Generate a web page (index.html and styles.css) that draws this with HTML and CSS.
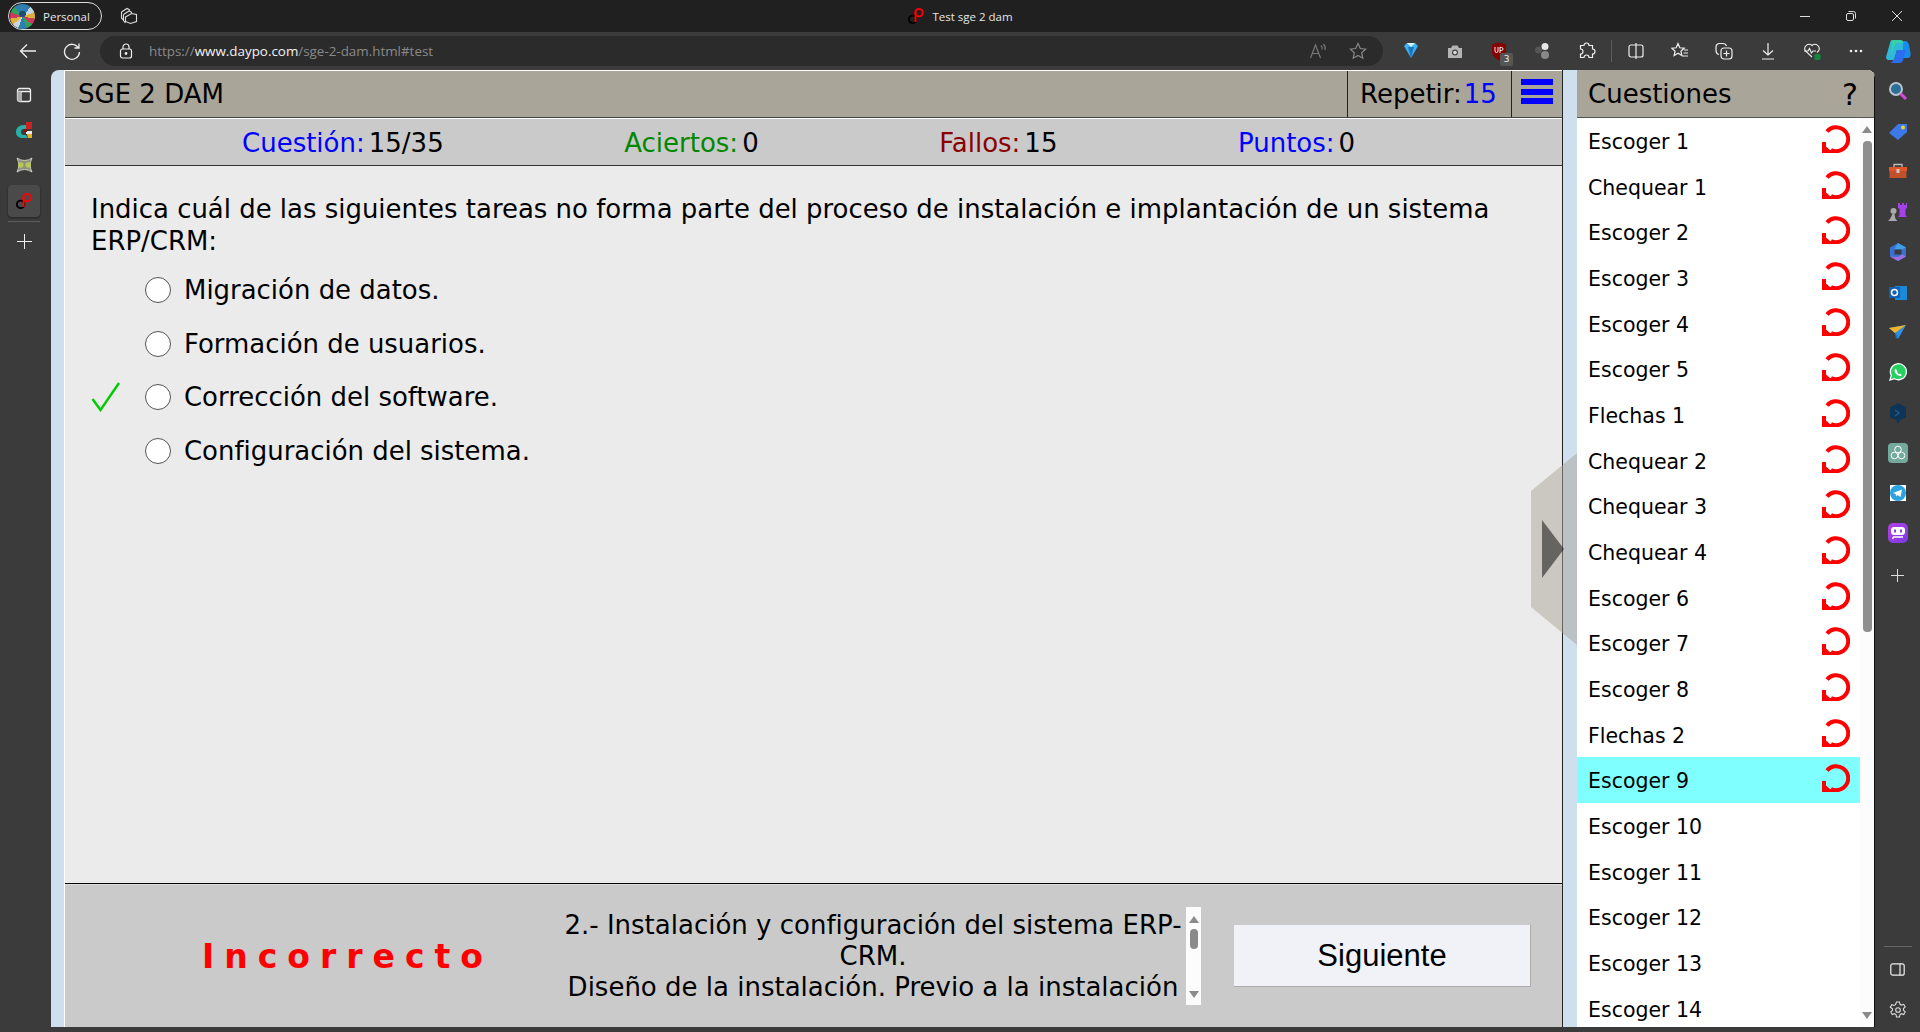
FILE: index.html
```html
<!DOCTYPE html>
<html lang="es">
<head>
<meta charset="utf-8">
<title>Test sge 2 dam</title>
<link rel="stylesheet" href="styles.css">
</head>
<body>
<svg class="defs" width="0" height="0" aria-hidden="true">
  <symbol id="retry" viewBox="0 0 28 28">
    <path d="M5 6.500A12 12 0 1 1 9 25" fill="none" stroke="#f00" stroke-width="4"/>
    <path d="M0 17h4v4.500l4 3.500h5v3H0z" fill="#f00"/>
  </symbol>
  <symbol id="logo" viewBox="0 0 24 24">
    <circle cx="7.500" cy="16.500" r="5" fill="none" stroke="#000" stroke-width="2.600"/>
    <circle cx="16" cy="7.500" r="5" fill="none" stroke="#f00" stroke-width="2.600"/>
    <path d="M11.500 7v13" stroke="#f00" stroke-width="2.600" fill="none"/>
  </symbol>
</svg>

<header class="titlebar">
  <div class="title-left">
    <div class="profile">
      <span class="avatar"></span>
      <span>Personal</span>
    </div>
    <svg class="tabs-icon" width="18" height="18" viewBox="0 0 18 18" fill="none" stroke="#ddd" stroke-width="1.100">
      <path d="M1.500 5 7 1.500l3 1.500M3.500 7.500l5.500-3.500 3 1.500"/>
      <path d="M1.500 5v6l2 2M3.500 7.500v6l2 2.500M5.500 10l6-3.500 5 1v7l-6 2-5-2z"/>
    </svg>
  </div>
  <div class="title-center">
    <svg width="18" height="18"><use href="#logo"/></svg>
    <span>Test sge 2 dam</span>
  </div>
  <div class="window-controls">
    <span class="win-btn"><svg width="12" height="12" stroke="#ddd" fill="none"><path d="M1 6.500h10"/></svg></span>
    <span class="win-btn"><svg width="12" height="12" stroke="#ddd" fill="none"><rect x="1.500" y="3.500" width="7" height="7" rx="1.500"/><path d="M3.500 1.500h5a2 2 0 0 1 2 2v5"/></svg></span>
    <span class="win-btn"><svg width="12" height="12" stroke="#ddd" fill="none"><path d="M1 1l10 10M11 1L1 11"/></svg></span>
  </div>
</header>

<nav class="toolbar">
  <span class="nav-slot back"><svg width="18" height="16" fill="none" stroke="#eee" stroke-width="1.300"><path d="M17 8H1.500M8 1.500 1.500 8 8 14.500"/></svg></span>
  <span class="nav-slot reload"><svg width="18" height="18" fill="none" stroke="#eee" stroke-width="1.300"><path d="M15.500 6A7.500 7.500 0 1 0 16.500 10M16 1.500V6h-4.500"/></svg></span>
  <div class="address">
    <svg width="14" height="16" fill="none" stroke="#eee" stroke-width="1.200"><rect x="1.500" y="6" width="11" height="9" rx="2"/><path d="M4 6V4a3 3 0 0 1 6 0v2"/><circle cx="7" cy="10.500" r=".8" fill="#eee"/></svg>
    <span class="url"><span class="url-dim">https://</span><span class="url-host">www.daypo.com</span><span class="url-dim">/sge-2-dam.html#test</span></span>
    <span class="addr-end">
      <svg width="18" height="18" fill="none" stroke="#777" stroke-width="1.200"><path d="M1.500 16 6.500 3l5 13M3.500 11.500h6M12 3.500a4 4 0 0 1 1 4M14.500 2a7 7 0 0 1 1.500 6"/></svg>
      <svg class="star" width="18" height="18" fill="none" stroke="#888" stroke-width="1.200"><path d="m9 1.500 2.300 5 5.400.6-4 3.700 1.100 5.400L9 13.500l-4.800 2.700 1.100-5.400-4-3.700 5.400-.6z"/></svg>
    </span>
  </div>
  <div class="tools">
    <span class="tool"><svg width="16" height="18"><path d="M1 4 4 1h8l3 3-7 12z" fill="#3fb2f0"/><path d="M4 1h8l-4 4z" fill="#d5f2ff"/><path d="M5 5h6l-3 11z" fill="#1b74c4"/></svg></span>
    <span class="tool"><svg width="16" height="15"><path d="M1 4h3l1.500-2.500h5L12 4h3v10H1z" fill="#b4b4b4"/><circle cx="8" cy="8.500" r="3" fill="#444"/><circle cx="8" cy="8.500" r="1.800" fill="#ddd"/></svg></span>
    <span class="tool has-badge"><svg width="16" height="19"><path d="M1 2.500 8 .5l7 2v7c0 4-3.500 7-7 9-3.500-2-7-5-7-9z" fill="#800"/><path d="M4 5v4a1.500 1.500 0 0 0 3 0V5M9 5v6M9 5.500h1.500a1.500 1.500 0 0 1 0 3H9" fill="none" stroke="#eee" stroke-width="1"/></svg><span class="badge">3</span></span>
    <span class="tool"><svg width="18" height="18"><circle cx="11" cy="4.500" r="3.500" fill="#e6e6e6"/><circle cx="4.500" cy="8" r="3.500" fill="#555"/><circle cx="11" cy="13" r="4" fill="#888"/></svg></span>
    <span class="tool"><svg width="18" height="18" fill="none" stroke="#eee" stroke-width="1.200"><path d="M6 3.500a2.500 2.500 0 0 1 5 0h3.500V7a2.500 2.500 0 0 1 0 5v3.500H11a2.500 2.500 0 0 0-5 0H2.500V12a2.500 2.500 0 0 0 0-5V3.500z"/></svg></span>
    <span class="tool-sep"></span>
    <span class="tool"><svg width="16" height="18" fill="none" stroke="#eee" stroke-width="1.200"><rect x="1" y="3" width="14" height="12" rx="2"/><path d="M8 1v16"/></svg></span>
    <span class="tool"><svg width="18" height="18" fill="none" stroke="#eee" stroke-width="1.200"><path d="m7 1.500 1.800 4.300 4.400.4-3.300 3 1 4.300L7 11.300l-3.900 2.200 1-4.300-3.300-3 4.400-.4zM13 8h4M12.500 11H17M11.500 14H17"/></svg></span>
    <span class="tool"><svg width="18" height="18" fill="none" stroke="#eee" stroke-width="1.200"><path d="M4 12.500c-2-.5-3-2-3-4V5a3.500 3.500 0 0 1 3.500-3.500H8c1.500 0 3 1 3.500 2.500"/><rect x="6" y="6" width="11" height="11" rx="3"/><path d="M11.500 8.500v6M8.500 11.500h6"/></svg></span>
    <span class="tool"><svg width="14" height="18" fill="none" stroke="#eee" stroke-width="1.200"><path d="M7 1v12M2 8.500 7 13l5-4.500M1 17h12"/></svg></span>
    <span class="tool"><svg width="18" height="18" fill="none" stroke="#eee" stroke-width="1.100"><path d="M9 15 2.500 9a4.300 4.300 0 0 1 6.500-5.500A4.300 4.300 0 0 1 15.500 9L14 10.500"/><path d="M1 9h4l1.500-2.500L8.500 11l1.500-2h3"/><rect x="11.500" y="12" width="6" height="6" rx="1.500" fill="#128a3d" stroke="none"/></svg></span>
    <span class="tool"><svg width="14" height="4" fill="#eee"><circle cx="2" cy="2" r="1.300"/><circle cx="7" cy="2" r="1.300"/><circle cx="12" cy="2" r="1.300"/></svg></span>
    <span class="tool copilot"><svg width="26" height="26" viewBox="0 0 26 26"><path d="M7 2h8c2 0 3 1 3.500 3L21 12H12L9 22H4C1.500 22 .5 20 1.500 17.500L5 5C5.500 3 6 2 7 2z" fill="#2fb9d8"/><path d="M18 3h2c2 0 3 1.500 4 4l1.500 8c.5 3-.5 5-3 5L18 20z" fill="#1a8bec"/><path d="M9 22l3-10h9l-3 10c-.5 2-2 3-4 3H7c-1 0-1-.5-1-.5z" fill="#2b6ff0"/><path d="M7 2h8c2 0 3 1 3.500 3H13c-2 0-3 1-3.500 3L6 17z" fill="#35d0a8"/></svg></span>
  </div>
</nav>

<div class="viewport">
  <aside class="left-rail">
    <span class="left-slot"><svg width="16" height="16" fill="none" stroke="#eee" stroke-width="1.300"><rect x="1.500" y="1.500" width="13" height="13" rx="2"/><path d="M1.500 4.500h13M5 4.500v10"/><rect x="1.500" y="4.500" width="3.500" height="10" fill="#aaa" stroke="none"/></svg></span>
    <span class="left-slot"><svg width="18" height="18"><path d="M11 1h6v7h-6z" fill="#c22"/><path d="M1 11c0-4 3-7 8-7h2v4H9c-2 0-3 1-3 3s1 3 3 3h2l2 3H8c-4 0-7-2-7-6z" fill="#28b0a8"/><path d="M11 10h6v3h-6z" fill="#eee"/><path d="M12 13h5v4h-4z" fill="#e8b020"/><path d="M9 8h3v3H9z" fill="#811"/></svg></span>
    <span class="left-slot"><svg width="17" height="16"><path d="M1 1Q8.500 6 16 1Q12.500 8 16 15Q8.500 10 1 15Q4.500 8 1 1z" fill="#8f9078" stroke="#ddd" stroke-width=".8"/><circle cx="4.800" cy="8" r="2.800" fill="#b9c85a"/><circle cx="12.200" cy="8" r="2.800" fill="#b9c85a"/></svg></span>
    <span class="left-slot active"><svg width="18" height="18"><use href="#logo"/></svg></span>
    <span class="left-sep"></span>
    <span class="left-slot plus"><svg width="15" height="15" stroke="#eee" fill="none"><path d="M7.500 0v15M0 7.500h15"/></svg></span>
  </aside>

  <div class="page">
    <main class="quiz">
      <div class="quiz-head">
        <div class="quiz-title">SGE 2 DAM</div>
        <div class="repeat">Repetir:<span class="num-blue">15</span></div>
        <div class="burger"><span></span><span></span><span></span></div>
      </div>
      <div class="stats">
        <div class="stat"><span class="lab-blue">Cuestión:</span><span>15/35</span></div>
        <div class="stat"><span class="lab-green">Aciertos:</span><span>0</span></div>
        <div class="stat"><span class="lab-red">Fallos:</span><span>15</span></div>
        <div class="stat"><span class="lab-blue">Puntos:</span><span>0</span></div>
      </div>
      <section class="question">
        <p class="q-text">Indica cuál de las siguientes tareas no forma parte del proceso de instalación e implantación de un sistema ERP/CRM:</p>
        <div class="option"><span class="mark"></span><span class="radio"></span><span>Migración de datos.</span></div>
        <div class="option"><span class="mark"></span><span class="radio"></span><span>Formación de usuarios.</span></div>
        <div class="option"><span class="mark"><svg width="30" height="30" fill="none" stroke="#0c0" stroke-width="2.400"><path d="M1.500 17 9.500 28 28 1"/></svg></span><span class="radio"></span><span>Corrección del software.</span></div>
        <div class="option"><span class="mark"></span><span class="radio"></span><span>Configuración del sistema.</span></div>
      </section>
      <footer class="result">
        <div class="verdict">Incorrecto</div>
        <div class="explain">2.- Instalación y configuración del sistema ERP-CRM.<br>Diseño de la instalación. Previo a la instalación</div>
        <div class="mini-scroll"><i class="up"></i><b></b><i class="down"></i></div>
        <button class="next" type="button">Siguiente</button>
      </footer>
    </main>

    <svg class="pull" width="46" height="192" viewBox="0 0 46 192"><path d="M0 38 46 0v192L0 154z" fill="#a9a598" fill-opacity=".5"/><path d="M11 67 33 96 11 125z" fill="#000" fill-opacity=".5"/></svg>

    <aside class="side">
      <div class="side-head"><span>Cuestiones</span><span class="help">?</span></div>
      <div class="side-body">
        <ul class="list">
          <li>Escoger 1<svg width="28" height="28"><use href="#retry"/></svg></li>
          <li>Chequear 1<svg width="28" height="28"><use href="#retry"/></svg></li>
          <li>Escoger 2<svg width="28" height="28"><use href="#retry"/></svg></li>
          <li>Escoger 3<svg width="28" height="28"><use href="#retry"/></svg></li>
          <li>Escoger 4<svg width="28" height="28"><use href="#retry"/></svg></li>
          <li>Escoger 5<svg width="28" height="28"><use href="#retry"/></svg></li>
          <li>Flechas 1<svg width="28" height="28"><use href="#retry"/></svg></li>
          <li>Chequear 2<svg width="28" height="28"><use href="#retry"/></svg></li>
          <li>Chequear 3<svg width="28" height="28"><use href="#retry"/></svg></li>
          <li>Chequear 4<svg width="28" height="28"><use href="#retry"/></svg></li>
          <li>Escoger 6<svg width="28" height="28"><use href="#retry"/></svg></li>
          <li>Escoger 7<svg width="28" height="28"><use href="#retry"/></svg></li>
          <li>Escoger 8<svg width="28" height="28"><use href="#retry"/></svg></li>
          <li>Flechas 2<svg width="28" height="28"><use href="#retry"/></svg></li>
          <li class="current">Escoger 9<svg width="28" height="28"><use href="#retry"/></svg></li>
          <li>Escoger 10</li>
          <li>Escoger 11</li>
          <li>Escoger 12</li>
          <li>Escoger 13</li>
          <li>Escoger 14</li>
        </ul>
        <div class="side-scroll"><i class="up"></i><b></b><i class="down"></i></div>
      </div>
    </aside>
  </div>

  <aside class="right-rail">
    <span class="r-slot"><svg width="20" height="20"><circle cx="8" cy="8" r="6" fill="#2b6e96" stroke="#b9c4cc" stroke-width="2"/><path d="M12.500 12.500 18 18" stroke="#d24bd8" stroke-width="3"/></svg></span>
    <span class="r-slot"><svg width="20" height="18"><path d="M1 11 10 2h9v8l-9 8z" fill="#3d78e8"/><circle cx="15" cy="5.500" r="2" fill="#f2d030"/></svg></span>
    <span class="r-slot"><svg width="20" height="16"><path d="M6 4V1.500h8V4" fill="none" stroke="#bbb" stroke-width="1.300"/><path d="M1 4h18v4H1z" fill="#e0552a"/><path d="M1.500 8h17v7h-17z" fill="#c2502a"/><rect x="8.500" y="6" width="3" height="4" fill="#ccc"/></svg></span>
    <span class="r-slot"><svg width="20" height="20"><path d="M10 1h2v2h2V1h2v2h2V1h1v5l-1.500 1v6l1.500 2H10l1.500-2V7L10 6z" fill="#a540ea"/><circle cx="5.500" cy="9" r="3" fill="#aaa"/><path d="M4.500 12h2l1 5 2 2H0l2-2z" fill="#aaa"/></svg></span>
    <span class="r-slot"><svg width="18" height="20"><path d="M9 1l8 4.500v9L9 19l-8-4.500v-9z" fill="#3b6fd0"/><path d="M1 14.500 9 19l8-4.500-4-2L9 15z" fill="#a070e0"/><path d="M9 1l8 4.500-4 2H5z" fill="#3fa0e8"/><path d="M5.500 7.500h7v5h-7z" fill="#3b3b3b"/></svg></span>
    <span class="r-slot"><svg width="18" height="18"><path d="M6 3h12v14H6z" fill="#1a8ad8"/><path d="M0 4h11v11H0z" fill="#0f5fb8"/><circle cx="5.500" cy="9.500" r="3" fill="none" stroke="#fff" stroke-width="1.500"/></svg></span>
    <span class="r-slot"><svg width="18" height="14"><path d="M0 3 17 0 9 14 6 8z" fill="#2f8fe8"/><path d="M0 3 17 0 6 8z" fill="#f0b429"/><path d="M6 8 7 14 9 11z" fill="#187bc0"/></svg></span>
    <span class="r-slot"><svg width="18" height="18"><path d="M1 17l1.300-4.600A8 8 0 1 1 5.500 15.700z" fill="#25cf60" stroke="#fff" stroke-width="1.300"/><path d="M6.500 5.500 5.500 7c0 3 3 6 6 6l1.500-1-2-1.500-1 .7-2-2 .5-1z" fill="#fff"/></svg></span>
    <span class="r-slot"><svg width="18" height="22"><path d="M9 1l8 4.500v10L11 18l-2 3.500L7 18l-6-2.500v-10z" fill="#0e3558"/><path d="M6 8l4 3-4 3" fill="none" stroke="#1e5a88" stroke-width="1.500"/></svg></span>
    <span class="r-slot"><span class="tile gpt"><svg width="16" height="16" fill="none" stroke="#fff" stroke-width="1"><circle cx="8" cy="4.500" r="3.300"/><circle cx="4.500" cy="10.500" r="3.300"/><circle cx="11.500" cy="10.500" r="3.300"/></svg></span></span>
    <span class="r-slot"><span class="tile tg"><svg width="16" height="16"><circle cx="8" cy="8" r="8" fill="#2aa3e0"/><path d="M3 8l9-3.500-1.500 7.500-3-2-1.500 1.500-.3-2.500z" fill="#fff"/></svg></span></span>
    <span class="r-slot"><span class="tile bot"><svg width="16" height="14"><rect x="1" y="1" width="14" height="8" rx="3" fill="#fff"/><rect x="4" y="3.500" width="2" height="3" fill="#9040e0"/><rect x="10" y="3.500" width="2" height="3" fill="#9040e0"/><path d="M3 11h10M3 11v2" stroke="#fff" stroke-width="1.300"/></svg></span></span>
    <span class="r-slot plus-r"><svg width="13" height="13" stroke="#ddd" fill="none"><path d="M6.500 0v13M0 6.500h13"/></svg></span>
    <span class="r-sep"></span>
    <span class="r-slot"><svg width="15" height="13" fill="none" stroke="#eee" stroke-width="1.200"><rect x=".8" y=".8" width="13.400" height="11.400" rx="2"/><path d="M10 .8v11.400"/></svg></span>
    <span class="r-slot"><svg width="18" height="18" viewBox="0 0 18 18" fill="none" stroke="#ddd" stroke-width="1.100"><path d="M7.500 1h3l.5 2.300 1.500.8 2.200-.8 1.500 2.600-1.700 1.600v1.800l1.700 1.600-1.500 2.600-2.200-.8-1.500.8-.5 2.500h-3l-.5-2.500-1.500-.8-2.200.8-1.500-2.600 1.700-1.600V7.900L1.300 6.300l1.500-2.600 2.200.8 1.500-.8z"/><circle cx="9" cy="9" r="2.300"/></svg></span>
  </aside>
</div>
</body>
</html>
```
FILE: styles.css
```css
* { box-sizing: border-box; }
html, body { margin: 0; height: 100%; }
body {
  display: flex;
  flex-direction: column;
  overflow: hidden;
  background: #3b3b3b;
  font-family: "DejaVu Sans", sans-serif;
  color: #000;
}
.defs { position: absolute; }

/* window title bar */
.titlebar {
  height: 32px;
  flex: none;
  background: #202020;
  color: #e6e6e6;
  font-family: "Open Sans", "Noto Sans", sans-serif;
  display: grid;
  grid-template-columns: 1fr auto 1fr;
  align-items: center;
}
.title-left { display: flex; align-items: center; padding-left: 8px; }
.profile {
  width: 94px;
  height: 28px;
  border: 1px solid #ddd;
  border-radius: 14px;
  display: flex;
  align-items: center;
  gap: 8px;
  padding-left: 1px;
  font-size: 11.500px;
}
.avatar {
  width: 25px;
  height: 25px;
  border-radius: 50%;
  background: radial-gradient(circle at 50% 40%, #1d4f74 0 16%, transparent 18%), repeating-conic-gradient(#2f7fb0 0 40deg, #c7d6e0 40deg 70deg, #e0b23c 70deg 100deg, #c93c5c 100deg 130deg, #2fa35c 130deg 160deg);
}
.tabs-icon { margin-left: 18px; }
.title-center { display: flex; align-items: center; gap: 7px; font-size: 11.500px; }
.window-controls { display: flex; justify-content: flex-end; }
.win-btn { width: 46px; height: 32px; display: flex; align-items: center; justify-content: center; }

/* browser toolbar */
.toolbar {
  height: 38px;
  flex: none;
  background: #3b3b3b;
  display: flex;
  align-items: center;
  padding-left: 8px;
}
.nav-slot { display: flex; align-items: center; justify-content: center; }
.back { width: 40px; }
.reload { width: 48px; }
.address {
  width: 1283px;
  height: 30px;
  margin-left: 4px;
  margin-right: 6px;
  border-radius: 15px;
  background: #2b2b2b;
  display: flex;
  align-items: center;
  padding-left: 19px;
  font-family: "Open Sans", "Noto Sans", sans-serif;
  font-size: 13.400px;
}
.url { margin-left: 16px; }
.url-dim { color: #8a8a8a; }
.url-host { color: #f2f2f2; }
.addr-end { margin-left: auto; display: flex; align-items: center; padding-right: 16px; }
.star { margin-left: 22px; }
.tools { display: flex; align-items: center; }
.tool { width: 44px; height: 30px; display: flex; align-items: center; justify-content: center; position: relative; }
.tool-sep { width: 1px; height: 22px; margin: 0 2px; background: #5c5c5c; }
.copilot { width: 40px; }
.has-badge .badge {
  position: absolute;
  right: 8px;
  bottom: 0;
  width: 13px;
  height: 13px;
  border-radius: 2px;
  background: #555;
  color: #eee;
  font-size: 9px;
  line-height: 13px;
  text-align: center;
}

/* main area */
.viewport { flex: 1; min-height: 0; display: flex; }
.left-rail { width: 51px; flex: none; display: flex; flex-direction: column; align-items: center; padding: 7px 3px 0 0; }
.left-slot { width: 32px; height: 35px; flex: none; display: flex; align-items: center; justify-content: center; }
.left-slot.active { height: 32px; margin-top: 3px; background: #4a4a4a; border-radius: 4px; box-shadow: 0 1px 2px #222; }
.left-sep { width: 32px; height: 1px; margin-top: 4px; background: #5c5c5c; flex: none; }
.plus { margin-top: 2px; }

.page {
  width: 1824px;
  flex: none;
  height: 957px;
  position: relative;
  display: flex;
  padding-left: 13px;
  background: #cfdfee;
  border-radius: 8px 8px 0 0;
  overflow: hidden;
}
.quiz {
  flex: 1;
  min-width: 0;
  display: flex;
  flex-direction: column;
  border-left: 1px solid #fff;
  border-right: 1px solid #222;
  background: #ebebeb;
}
.quiz-head {
  height: 48px;
  flex: none;
  display: flex;
  align-items: stretch;
  background: #a9a598;
  border-top: 1px solid #fff;
  border-bottom: 1px solid #444;
  font-size: 26px;
}
.quiz-title { flex: 1; padding-left: 13px; line-height: 47px; }
.repeat { width: 164px; border-left: 1px solid #222; padding-left: 12px; line-height: 47px; }
.num-blue { color: #00f; margin-left: 2px; }
.burger { width: 51px; border-left: 1px solid #222; display: flex; flex-direction: column; gap: 3.500px; padding: 8px 0 0 9px; }
.burger span { width: 32px; height: 6px; background: #00f; }
.stats {
  height: 48px;
  flex: none;
  background: #cacaca;
  border-top: 1px solid #fff;
  border-bottom: 1px solid #333;
  display: flex;
  gap: 180.500px;
  padding: 2px 0 0 177px;
  align-items: center;
  font-size: 26px;
}
.stat { display: flex; gap: 4px; }
.lab-blue { color: #00f; }
.lab-green { color: #080; }
.lab-red { color: #8b0000; }

.question { flex: 1; min-height: 0; padding: 28px 40px 0 26px; font-size: 25.950px; }
.q-text { margin: 0 0 6px; line-height: 31.500px; }
.option { height: 53.800px; display: flex; align-items: center; }
.mark { width: 54px; display: flex; align-items: center; flex: none; }
.radio { width: 26px; height: 26px; flex: none; margin-right: 13px; border-radius: 50%; background: #fff; border: 1.500px solid #555; }

.result {
  height: 144px;
  flex: none;
  display: flex;
  align-items: flex-start;
  background: #cacaca;
  border-top: 1px solid #000;
  box-shadow: inset 0 1px 0 #ddd;
}
.verdict {
  width: 495px;
  padding: 53px 0 0 137px;
  color: #f00;
  font-size: 33px;
  font-weight: bold;
  line-height: 40px;
  letter-spacing: 10px;
}
.explain {
  width: 626px;
  height: 98px;
  margin-top: 24px;
  padding-top: 2px;
  overflow: hidden;
  text-align: center;
  font-size: 26px;
  line-height: 31px;
}
.mini-scroll {
  width: 15px;
  height: 98px;
  margin-top: 23px;
  flex: none;
  background: #fcfcfc;
  position: relative;
}
.mini-scroll b { position: absolute; left: 4px; top: 22px; width: 8px; height: 20px; border-radius: 4px; background: #8a8a8a; }
.up, .down { position: absolute; left: 3px; width: 0; height: 0; border-left: 5px solid transparent; border-right: 5px solid transparent; }
.up { top: 9px; border-bottom: 7px solid #8a8a8a; }
.down { bottom: 7px; border-top: 7px solid #8a8a8a; }
.next {
  width: 297px;
  height: 62px;
  margin: 41px 0 0 33px;
  border: 0;
  border-right: 1px solid #aaa;
  border-bottom: 1px solid #aaa;
  background: #f0f2f7;
  color: #000;
  font-family: "Liberation Sans", sans-serif;
  font-size: 31px;
}

.pull { position: absolute; left: 1480px; top: 383px; }

.side {
  width: 298px;
  flex: none;
  margin-left: 14px;
  display: flex;
  flex-direction: column;
  background: #fff;
  position: relative;
  border-right: 1px solid #111;
}
.side-head {
  height: 48px;
  flex: none;
  background: #a9a598;
  border-bottom: 1px solid #555;
  border-top: 1px solid #a9a598;
  display: flex;
  justify-content: space-between;
  padding: 0 16px 0 11px;
  line-height: 47px;
  font-size: 26px;
}
.help { font-size: 30px; }
.side-body { flex: 1; min-height: 0; display: flex; overflow: hidden; }
.list { flex: 1; margin: 0; padding: 0; list-style: none; font-size: 20.500px; overflow: hidden; }
.list li {
  height: 45.680px;
  display: flex;
  align-items: center;
  justify-content: space-between;
  padding: 2px 10px 0 11px;
}
.list svg { margin-bottom: 6px; }
.list .current { background: #7fffff; }
.side-scroll { width: 14px; flex: none; background: #fcfcfc; position: relative; }
.side-scroll b { position: absolute; left: 3px; top: 23px; width: 9px; height: 491px; border-radius: 4px; background: #8f8f8f; }
.side-scroll .up { left: 2px; top: 8px; }
.side-scroll .down { left: 2px; bottom: 8px; }

.right-rail { flex: 1; display: flex; flex-direction: column; align-items: center; padding-top: 1px; padding-bottom: 2px; }
.r-slot { height: 40.200px; flex: none; display: flex; align-items: center; justify-content: center; }
.plus-r { margin-top: 2px; }
.r-sep { width: 28px; height: 1px; margin-top: auto; margin-bottom: 3px; background: #666; flex: none; }
.tile { width: 20px; height: 20px; display: flex; align-items: center; justify-content: center; }
.gpt { background: #74aa9c; border-radius: 4px; }
.tg { background: #fff; width: 16px; height: 16px; }
.bot { background: linear-gradient(135deg, #b53fe8, #7a3be0); border-radius: 5px; }
```
